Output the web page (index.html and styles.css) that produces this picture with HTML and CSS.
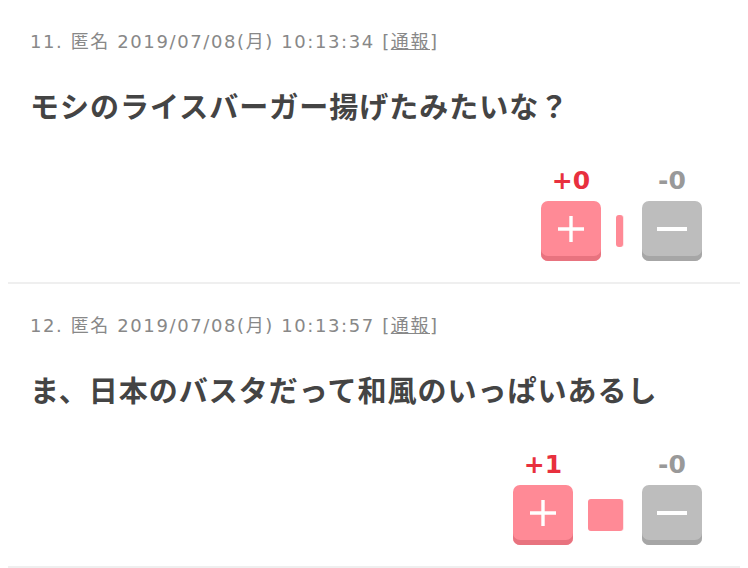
FILE: index.html
```html
<!DOCTYPE html>
<html lang="ja">
<head>
    <meta charset="UTF-8">
    <meta name="viewport" content="width=device-width, initial-scale=1.0">
    <title>コメント</title>
    <link rel="stylesheet" href="styles.css">
</head>
<body>
    <div class="res-list">
        <div class="res">
            <div class="res-head">11. 匿名 2019/07/08(月) 10:13:34 [<a href="#">通報</a>]</div>
            <div class="res-body">モシのライスバーガー揚げたみたいな？</div>
            <div class="vote">
                <div class="vote-col">
                    <span class="count plus">+0</span>
                    <button class="vote-btn plus-btn">
                        <svg width="28" height="28" viewBox="0 0 28 28"><path d="M14 1v26M1 14h26" stroke="#fff" stroke-width="3.4"/></svg>
                    </button>
                </div>
                <div class="ratio"><div class="ratio-fill" style="width: 7px"></div></div>
                <div class="vote-col">
                    <span class="count minus">-0</span>
                    <button class="vote-btn minus-btn">
                        <svg width="30" height="28" viewBox="0 0 30 28"><path d="M0 14h30" stroke="#fff" stroke-width="4"/></svg>
                    </button>
                </div>
            </div>
        </div>

        <div class="res">
            <div class="res-head">12. 匿名 2019/07/08(月) 10:13:57 [<a href="#">通報</a>]</div>
            <div class="res-body">ま、日本のバスタだって和風のいっぱいあるし</div>
            <div class="vote">
                <div class="vote-col">
                    <span class="count plus">+1</span>
                    <button class="vote-btn plus-btn">
                        <svg width="28" height="28" viewBox="0 0 28 28"><path d="M14 1v26M1 14h26" stroke="#fff" stroke-width="3.4"/></svg>
                    </button>
                </div>
                <div class="ratio"><div class="ratio-fill" style="width: 35px"></div></div>
                <div class="vote-col">
                    <span class="count minus">-0</span>
                    <button class="vote-btn minus-btn">
                        <svg width="30" height="28" viewBox="0 0 30 28"><path d="M0 14h30" stroke="#fff" stroke-width="4"/></svg>
                    </button>
                </div>
            </div>
        </div>
    </div>
</body>
</html>
```

FILE: styles.css
```css
body {
    margin: 0;
    background: #fff;
    font-family: "DejaVu Sans", "Noto Sans CJK JP", sans-serif;
    color: #444;
}

.res-list {
    padding: 0 8px;
}

.res {
    padding: 29px 38px 21px 22px;
    border-bottom: 2px solid #efefef;
}

.res-head {
    font-size: 18px;
    line-height: 26px;
    letter-spacing: 1.6px;
    color: #888;
}

.res-head a {
    color: #888;
    text-decoration: underline;
}

.res-body {
    margin-top: 30px;
    font-family: "Noto Sans CJK JP", sans-serif;
    font-weight: bold;
    font-size: 29px;
    line-height: 40px;
    letter-spacing: 1px;
    color: #444;
}

.vote {
    margin-top: 44px;
    display: flex;
    justify-content: flex-end;
    align-items: flex-end;
}

.vote-col {
    display: flex;
    flex-direction: column;
    align-items: center;
    gap: 8px;
}

.count {
    font-weight: bold;
    font-size: 25px;
    line-height: 24px;
}

.count.plus {
    color: #e8303e;
}

.count.minus {
    color: #999;
}

.vote-btn {
    width: 60px;
    height: 60px;
    border: none;
    border-radius: 7px;
    padding: 0 0 4px;
    display: flex;
    align-items: center;
    justify-content: center;
    cursor: pointer;
}

.plus-btn {
    background: #ff8a96;
    box-shadow: inset 0 -5px 0 #e8737f;
}

.minus-btn {
    background: #bdbdbd;
    box-shadow: inset 0 -5px 0 #a6a6a6;
}

.ratio {
    margin: 0 19px 14px 15px;
    height: 32px;
    display: flex;
}

.ratio-fill {
    height: 100%;
    background: #ff8a96;
    border-radius: 3px;
    box-shadow: 1px 0 0 #fde6e8;
}
```
